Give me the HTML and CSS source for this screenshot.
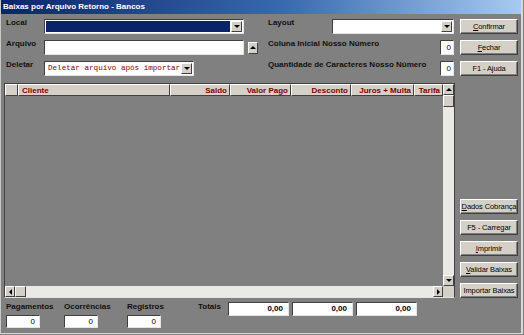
FILE: index.html
```html
<!DOCTYPE html>
<html lang="pt-BR">
<head>
    <meta charset="UTF-8">
    <title>Baixas por Arquivo Retorno - Bancos</title>
    <link rel="stylesheet" href="styles.css">
</head>
<body>
    <div class="window">
        <div class="titlebar">Baixas por Arquivo Retorno - Bancos</div>
        <div class="content">
            <div class="form-row">
                <div class="left-part">
                    <span class="lbl">Local</span>
                    <div class="combo combo-local"><span class="combo-text selected"></span><span class="drop-btn"><i class="tri-down"></i></span></div>
                </div>
                <div class="right-part">
                    <span class="lbl lbl-layout">Layout</span>
                    <div class="combo combo-layout"><span class="combo-text"></span><span class="drop-btn"><i class="tri-down"></i></span></div>
                </div>
                <button class="btn btn-side"><u>C</u>onfirmar</button>
            </div>
            <div class="form-row">
                <div class="left-part">
                    <span class="lbl">Arquivo</span>
                    <div class="field field-file"></div>
                    <span class="mini-btn"><i class="tri-up"></i></span>
                </div>
                <div class="right-part">
                    <span class="lbl lbl-long">Coluna Inicial Nosso Número</span>
                    <div class="field field-num">0</div>
                </div>
                <button class="btn btn-side"><u>F</u>echar</button>
            </div>
            <div class="form-row">
                <div class="left-part">
                    <span class="lbl">Deletar</span>
                    <div class="combo combo-delete"><span class="combo-text mono">Deletar arquivo após importar</span><span class="drop-btn"><i class="tri-down"></i></span></div>
                </div>
                <div class="right-part">
                    <span class="lbl lbl-long">Quantidade de Caracteres Nosso Número</span>
                    <div class="field field-num">0</div>
                </div>
                <button class="btn btn-side">F1 - Ajuda</button>
            </div>

            <div class="main-area">
                <div class="grid">
                    <div class="grid-header">
                        <span class="col col-fixed"></span>
                        <span class="col col-cliente">Cliente</span>
                        <span class="col col-saldo">Saldo</span>
                        <span class="col col-pago">Valor Pago</span>
                        <span class="col col-desc">Desconto</span>
                        <span class="col col-juros">Juros + Multa</span>
                        <span class="col col-tarifa">Tarifa</span>
                    </div>
                    <div class="grid-body"></div>
                    <div class="hscroll">
                        <span class="sb-btn"><i class="tri-left"></i></span>
                        <span class="sb-thumb"></span>
                        <span class="sb-track"></span>
                        <span class="sb-btn"><i class="tri-right"></i></span>
                    </div>
                    <div class="vscroll">
                        <span class="sb-btn"><i class="tri-up"></i></span>
                        <span class="sb-thumb"></span>
                        <span class="sb-track"></span>
                        <span class="sb-btn"><i class="tri-down"></i></span>
                    </div>
                    <div class="sb-corner"></div>
                </div>
                <div class="side-buttons">
                    <button class="btn btn-side"><u>D</u>ados Cobrança</button>
                    <button class="btn btn-side">F5 - Carregar</button>
                    <button class="btn btn-side"><u>I</u>mprimir</button>
                    <button class="btn btn-side"><u>V</u>alidar Baixas</button>
                    <button class="btn btn-side">Importar Baixas</button>
                </div>
            </div>

            <div class="bottom-bar">
                <div class="stat stat-pag">
                    <span class="lbl">Pagamentos</span>
                    <div class="field field-count">0</div>
                </div>
                <div class="stat stat-oco">
                    <span class="lbl">Ocorrências</span>
                    <div class="field field-count">0</div>
                </div>
                <div class="stat stat-reg">
                    <span class="lbl">Registros</span>
                    <div class="field field-count">0</div>
                </div>
                <div class="totals">
                    <span class="lbl">Totais</span>
                    <div class="field field-total">0,00</div>
                    <div class="field field-total">0,00</div>
                    <div class="field field-total">0,00</div>
                </div>
            </div>
        </div>
    </div>
</body>
</html>
```

FILE: styles.css
```css
body {
    margin: 0;
    background-color: #808080;
    font-family: "Liberation Sans", Arial, sans-serif;
    font-size: 8px;
    color: #000000;
}

.window {
    width: 520px;
    height: 333px;
    border-left: 1px solid #c8c8c8;
    border-right: 2px solid #d8d8d8;
    border-bottom: 1px solid #d8d8d8;
    display: flex;
    flex-direction: column;
}

.titlebar {
    height: 14px;
    line-height: 14px;
    padding-left: 2px;
    color: #ffffff;
    font-weight: bold;
    font-size: 8px;
    background: linear-gradient(to right, #0a246a 0%, #3a6ab0 55%, #a6caf0 100%);
}

.content {
    flex: 1;
    display: flex;
    flex-direction: column;
    padding: 5px 0 0 3px;
}

/* top form */
.form-row {
    display: flex;
    align-items: center;
    height: 15px;
    margin-bottom: 6px;
    padding-left: 2px;
}

.left-part {
    width: 262px;
    display: flex;
    align-items: center;
}

.right-part {
    width: 186px;
    display: flex;
    align-items: center;
}

.lbl {
    font-weight: bold;
    font-size: 8px;
    color: #101010;
    white-space: nowrap;
}

.left-part .lbl {
    width: 38px;
    align-self: flex-start;
    margin-top: -1px;
}

.right-part .lbl {
    align-self: flex-start;
    margin-top: -1px;
}

.lbl-layout {
    width: 64px;
}

.lbl-long {
    width: 172px;
}

.field,
.combo {
    box-sizing: border-box;
    height: 15px;
    background-color: #ffffff;
    border-top: 1px solid #404040;
    border-left: 1px solid #404040;
    border-bottom: 1px solid #e4e4e4;
    border-right: 1px solid #e4e4e4;
}

.combo {
    display: flex;
    align-items: stretch;
    padding: 1px;
}

.combo-text {
    flex: 1;
    line-height: 11px;
    padding-left: 2px;
    overflow: hidden;
    white-space: nowrap;
}

.combo-text.selected {
    background-color: #0a246a;
    margin-right: 1px;
}

.combo-text.mono {
    font-family: "Liberation Mono", "Courier New", monospace;
    font-size: 7.6px;
    color: #800000;
}

.combo-local {
    width: 200px;
}

.combo-layout {
    width: 122px;
}

.combo-delete {
    width: 150px;
}

.drop-btn,
.mini-btn,
.sb-btn {
    box-sizing: border-box;
    display: flex;
    align-items: center;
    justify-content: center;
    background-color: #d4d0c8;
    border-top: 1px solid #ffffff;
    border-left: 1px solid #ffffff;
    border-bottom: 1px solid #404040;
    border-right: 1px solid #404040;
}

.drop-btn {
    width: 11px;
}

.mini-btn {
    width: 10px;
    height: 12px;
    margin-left: 4px;
}

.field-file {
    width: 200px;
}

.field-num {
    width: 14px;
    text-align: right;
    padding-right: 2px;
    line-height: 13px;
}

.tri-down,
.tri-up,
.tri-left,
.tri-right {
    width: 0;
    height: 0;
    display: block;
}

.tri-down {
    border-left: 3px solid transparent;
    border-right: 3px solid transparent;
    border-top: 3px solid #000000;
}

.tri-up {
    border-left: 3px solid transparent;
    border-right: 3px solid transparent;
    border-bottom: 3px solid #000000;
}

.tri-left {
    border-top: 3px solid transparent;
    border-bottom: 3px solid transparent;
    border-right: 3px solid #000000;
}

.tri-right {
    border-top: 3px solid transparent;
    border-bottom: 3px solid transparent;
    border-left: 3px solid #000000;
}

.btn {
    box-sizing: border-box;
    font-family: "Liberation Sans", Arial, sans-serif;
    font-size: 7.5px;
    letter-spacing: -0.1px;
    color: #000000;
    background-color: #d4d0c8;
    border-top: 1px solid #ffffff;
    border-left: 1px solid #ffffff;
    border-bottom: 1px solid #404040;
    border-right: 1px solid #404040;
    box-shadow: inset -1px -1px 0 #808080;
    padding: 0;
    white-space: nowrap;
}

.btn-side {
    width: 58px;
    height: 15px;
    margin-left: 6px;
}

/* grid area */
.main-area {
    display: flex;
    height: 215px;
    margin-top: 1px;
}

.grid {
    box-sizing: border-box;
    width: 451px;
    display: grid;
    grid-template-columns: 1fr 11px;
    grid-template-rows: 12px 1fr 11px;
    border-top: 1px solid #404040;
    border-left: 1px solid #404040;
    border-bottom: 1px solid #e4e4e4;
    border-right: 1px solid #404040;
    background-color: #808080;
}

.grid-header {
    grid-column: 1;
    grid-row: 1;
    display: flex;
}

.col {
    box-sizing: border-box;
    background-color: #d4d0c8;
    color: #800000;
    font-weight: bold;
    line-height: 11px;
    text-align: right;
    padding-right: 2px;
    border-right: 1px solid #404040;
    border-bottom: 1px solid #404040;
    border-top: 1px solid #ffffff;
    border-left: 1px solid #ffffff;
    white-space: nowrap;
    overflow: hidden;
}

.col-fixed { width: 13px; }
.col-cliente { width: 152px; text-align: left; padding-left: 3px; }
.col-saldo { width: 60px; }
.col-pago { width: 61px; }
.col-desc { width: 60px; }
.col-juros { width: 63px; }
.col-tarifa { width: 29px; }

.grid-body {
    grid-column: 1;
    grid-row: 2;
}

.vscroll {
    grid-column: 2;
    grid-row: 1 / 3;
    display: flex;
    flex-direction: column;
}

.vscroll .sb-btn {
    height: 11px;
}

.vscroll .sb-thumb {
    height: 12px;
}

.hscroll {
    grid-column: 1;
    grid-row: 3;
    display: flex;
}

.hscroll .sb-btn {
    width: 10px;
}

.hscroll .sb-thumb {
    width: 11px;
}

.sb-thumb {
    box-sizing: border-box;
    background-color: #d4d0c8;
    border-top: 1px solid #ffffff;
    border-left: 1px solid #ffffff;
    border-bottom: 1px solid #404040;
    border-right: 1px solid #404040;
}

.sb-track {
    flex: 1;
    background-color: #ebe9e5;
}

.sb-corner {
    grid-column: 2;
    grid-row: 3;
    background-color: #d4d0c8;
}

.side-buttons {
    display: flex;
    flex-direction: column;
    justify-content: flex-end;
    gap: 6px;
    margin-left: -1px;
}

/* bottom */
.bottom-bar {
    display: flex;
    align-items: flex-start;
    padding-top: 4px;
    padding-left: 2px;
}

.stat {
    display: flex;
    flex-direction: column;
    gap: 3px;
}

.stat-pag { width: 58px; }
.stat-oco { width: 63px; }
.stat-reg { width: 71px; }

.stat .lbl {
    line-height: 10px;
}

.field-count {
    width: 34px;
    height: 13px;
    line-height: 11px;
    text-align: right;
    padding-right: 4px;
}

.totals {
    display: flex;
    align-items: flex-start;
    gap: 3px;
}

.totals .lbl {
    width: 27px;
    line-height: 10px;
}

.field-total {
    width: 61px;
    height: 14px;
    line-height: 12px;
    text-align: right;
    padding-right: 5px;
    font-weight: bold;
}
```
